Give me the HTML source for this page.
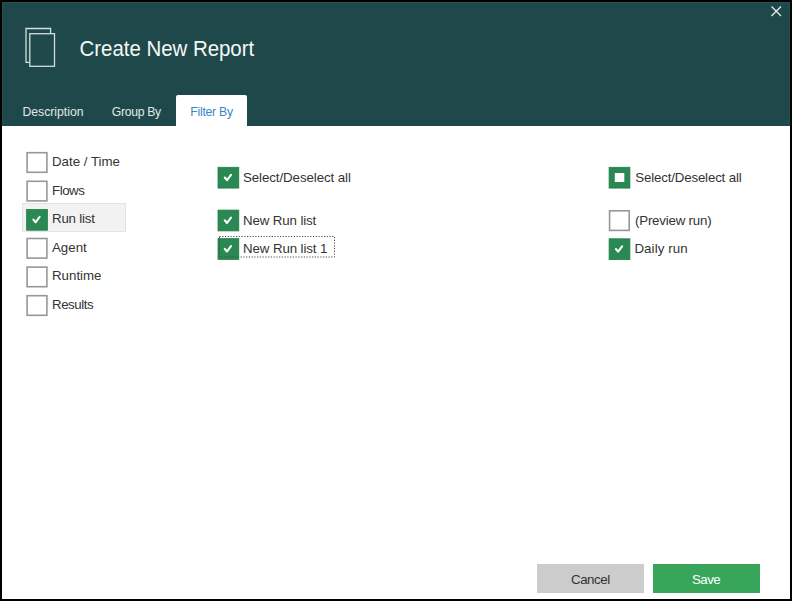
<!DOCTYPE html>
<html><head><meta charset="utf-8">
<style>
html,body{margin:0;padding:0;}
body{width:792px;height:601px;background:#000;position:relative;overflow:hidden;font-family:"Liberation Sans",sans-serif;}
.dlg{position:absolute;left:2px;top:2px;width:788px;height:597px;background:#fff;overflow:hidden;}
.hdr{position:absolute;left:2px;top:2px;width:788px;height:124px;background:#1f484a;}
.t{position:absolute;white-space:pre;line-height:20px;height:20px;}
.title{font-size:20.5px;color:#f4f7f7;line-height:30px;height:30px;transform:scaleY(1.09);transform-origin:0 20px;}
.tab{font-size:12.2px;color:#e1e8e8;}
.lbl{font-size:13.3px;color:#333;}
svg.ov{position:absolute;left:0;top:0;}
</style></head><body>
<div class="dlg"></div>
<div class="hdr"></div>
<div style="position:absolute;left:176px;top:95px;width:71px;height:32px;background:#fff;border-radius:2px 2px 0 0;"></div>
<div style="position:absolute;left:22px;top:203px;width:101.5px;height:26.5px;background:#f2f2f2;border:1.5px solid #e3e3e3;"></div>
<div style="position:absolute;left:537px;top:564px;width:107px;height:28.5px;background:#cccccc;"></div>
<div style="position:absolute;left:652.8px;top:564px;width:107px;height:28.5px;background:#38a65a;"></div>

<svg class="ov" width="792" height="601" viewBox="0 0 792 601">
  <!-- header border highlight -->
  <path d="M2.5 126 V2.5 H789.5 V126" fill="none" stroke="#245252" stroke-width="1"/>
  <!-- doc icon -->
  <g fill="none" stroke="#d3dddd" stroke-width="1.3">
    <path d="M29.2 62.3 H26 V28.5 H50.6 V33.2"/>
    <rect x="29.8" y="33.7" width="24.7" height="32.6"/>
  </g>
  <!-- close X -->
  <path d="M771.5 6.5 L781 16 M781 6.5 L771.5 16" stroke="#e6eded" stroke-width="1.3"/>

  <!-- unchecked boxes -->
  <g fill="none" stroke="#979797" stroke-width="1.6">
    <rect x="27.1" y="152.7" width="19.8" height="19.6"/>
    <rect x="27.1" y="181.3" width="19.8" height="19.6"/>
    <rect x="27.1" y="238.5" width="19.8" height="19.6"/>
    <rect x="27.1" y="267.1" width="19.8" height="19.6"/>
    <rect x="27.1" y="295.7" width="19.8" height="19.6"/>
    <rect x="609.6" y="210.8" width="19.6" height="19.6"/>
  </g>
  <!-- checked boxes -->
  <g fill="#2a8853" stroke="#237e4a" stroke-width="0.8">
    <rect x="26.6" y="209.4" width="20.8" height="20.8"/>
    <rect x="218" y="167.3" width="20.8" height="20.8"/>
    <rect x="218" y="210.1" width="20.8" height="20.8"/>
    <rect x="218" y="238.6" width="20.8" height="20.8"/>
    <rect x="609.1" y="167.3" width="20.8" height="20.8"/>
    <rect x="609.1" y="238.8" width="20.8" height="20.8"/>
  </g>
  <g fill="none" stroke="#fff" stroke-width="2.1" stroke-linecap="round" stroke-linejoin="round">
    <path d="M33.4 219.6 L35.6 222.3 L39.6 216.9"/>
    <path d="M224.8 177.5 L227.0 180.2 L231.0 174.8"/>
    <path d="M224.8 220.3 L227.0 223.0 L231.0 217.6"/>
    <path d="M224.8 248.8 L227.0 251.5 L231.0 246.1"/>
    <path d="M615.9 249.0 L618.1 251.7 L622.1 246.3"/>
  </g>
  <rect x="614.8" y="173" width="9.5" height="9" fill="#fff"/>
  <!-- focus rect -->
  <rect x="219.5" y="236.5" width="115" height="20.5" fill="none" stroke="#4a4a4a" stroke-width="1" stroke-dasharray="1.2 1.55"/>
</svg>

<div class="t title" style="left:79.5px;top:33.6px;letter-spacing:-0.05px">Create New Report</div>
<div class="t tab" style="left:22.5px;top:102px">Description</div>
<div class="t tab" style="left:111.7px;top:102px;letter-spacing:-0.28px">Group By</div>
<div class="t tab" style="left:190.3px;top:102px;letter-spacing:-0.25px;color:#3a86c6">Filter By</div>

<div class="t lbl" style="left:52px;top:152px">Date / Time</div>
<div class="t lbl" style="left:52px;top:181px;letter-spacing:-0.45px">Flows</div>
<div class="t lbl" style="left:52px;top:209px;letter-spacing:-0.2px">Run list</div>
<div class="t lbl" style="left:52px;top:238px">Agent</div>
<div class="t lbl" style="left:52px;top:266px">Runtime</div>
<div class="t lbl" style="left:52px;top:295px;letter-spacing:-0.45px">Results</div>

<div class="t lbl" style="left:243px;top:168px;letter-spacing:-0.08px">Select/Deselect all</div>
<div class="t lbl" style="left:243px;top:211px;letter-spacing:-0.12px">New Run list</div>
<div class="t lbl" style="left:243px;top:239px;letter-spacing:-0.1px">New Run list 1</div>

<div class="t lbl" style="left:635.3px;top:168px;letter-spacing:-0.17px">Select/Deselect all</div>
<div class="t lbl" style="left:635px;top:211px;letter-spacing:-0.2px">(Preview run)</div>
<div class="t lbl" style="left:634.4px;top:239px;letter-spacing:0.1px">Daily run</div>

<div class="t lbl" style="left:571px;top:569.5px;letter-spacing:-0.45px;color:#333">Cancel</div>
<div class="t lbl" style="left:692px;top:569.5px;letter-spacing:-0.55px;color:#fff">Save</div>
</body></html>
